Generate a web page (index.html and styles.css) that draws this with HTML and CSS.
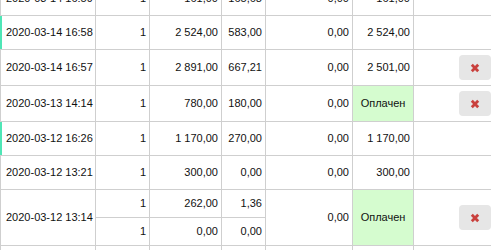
FILE: index.html
```html
<!DOCTYPE html>
<html>
<head>
<meta charset="utf-8">
<link rel="stylesheet" href="styles.css">
</head>
<body>
<div class="viewport">
<table class="orders">
  <colgroup>
    <col class="c-date"><col class="c-qty"><col class="c-sum"><col class="c-tax"><col class="c-disc"><col class="c-total"><col class="c-act">
  </colgroup>
  <tbody>
    <tr>
      <td class="date">2020-03-14 16:59</td>
      <td class="num">1</td>
      <td class="num">161,00</td>
      <td class="num">165,68</td>
      <td class="num">0,00</td>
      <td class="num">161,00</td>
      <td class="act"></td>
    </tr>
    <tr>
      <td class="date marked">2020-03-14 16:58</td>
      <td class="num">1</td>
      <td class="num">2 524,00</td>
      <td class="num">583,00</td>
      <td class="num">0,00</td>
      <td class="num">2 524,00</td>
      <td class="act"></td>
    </tr>
    <tr>
      <td class="date">2020-03-14 16:57</td>
      <td class="num">1</td>
      <td class="num">2 891,00</td>
      <td class="num">667,21</td>
      <td class="num">0,00</td>
      <td class="num">2 501,00</td>
      <td class="act"><button class="del" type="button"><svg viewBox="0 0 10 10" width="10" height="10"><path d="M1.8 1.8 L8.2 8.2 M8.2 1.8 L1.8 8.2"/></svg></button></td>
    </tr>
    <tr>
      <td class="date">2020-03-13 14:14</td>
      <td class="num">1</td>
      <td class="num">780,00</td>
      <td class="num">180,00</td>
      <td class="num">0,00</td>
      <td class="num paid">Оплачен</td>
      <td class="act"><button class="del" type="button"><svg viewBox="0 0 10 10" width="10" height="10"><path d="M1.8 1.8 L8.2 8.2 M8.2 1.8 L1.8 8.2"/></svg></button></td>
    </tr>
    <tr>
      <td class="date marked">2020-03-12 16:26</td>
      <td class="num">1</td>
      <td class="num">1 170,00</td>
      <td class="num">270,00</td>
      <td class="num">0,00</td>
      <td class="num">1 170,00</td>
      <td class="act"></td>
    </tr>
    <tr>
      <td class="date">2020-03-12 13:21</td>
      <td class="num">1</td>
      <td class="num">300,00</td>
      <td class="num">0,00</td>
      <td class="num">0,00</td>
      <td class="num">300,00</td>
      <td class="act"></td>
    </tr>
    <tr>
      <td class="date" rowspan="2">2020-03-12 13:14</td>
      <td class="num sub">1</td>
      <td class="num sub">262,00</td>
      <td class="num sub">1,36</td>
      <td class="num" rowspan="2">0,00</td>
      <td class="num paid" rowspan="2">Оплачен</td>
      <td class="act" rowspan="2"><button class="del" type="button"><svg viewBox="0 0 10 10" width="10" height="10"><path d="M1.8 1.8 L8.2 8.2 M8.2 1.8 L1.8 8.2"/></svg></button></td>
    </tr>
    <tr>
      <td class="num sub">1</td>
      <td class="num sub">0,00</td>
      <td class="num sub">0,00</td>
    </tr>
    <tr>
      <td class="date">2020-03-12 12:40</td>
      <td class="num">1</td>
      <td class="num">540,00</td>
      <td class="num">0,00</td>
      <td class="num">0,00</td>
      <td class="num">540,00</td>
      <td class="act"></td>
    </tr>
  </tbody>
</table>
</div>
</body>
</html>
```

FILE: styles.css
```css
html, body {
  margin: 0;
  padding: 0;
  background: #fff;
  overflow: hidden;
}
.viewport {
  width: 491px;
  height: 250px;
  overflow: hidden;
}
.orders {
  border-collapse: collapse;
  table-layout: fixed;
  width: 500px;
  margin-top: -19px;
  font-family: "Liberation Sans", Arial, sans-serif;
  font-size: 11px;
  line-height: 17px;
  color: #111;
}
.c-date { width: 95px; }
.c-qty { width: 54px; }
.c-sum { width: 72px; }
.c-tax { width: 44px; }
.c-disc { width: 87px; }
.c-total { width: 61px; }
.c-act { width: 87px; }
.orders td {
  border: 1px solid #cfcfcf;
  padding: 8px 3px 8px 5px;
  vertical-align: middle;
  white-space: nowrap;
}
.orders td.num { text-align: right; }
.orders td.sub { padding-top: 5px; padding-bottom: 5px; }
.orders td.paid {
  background: #d5fccf;
  text-align: center;
  padding-left: 3px;
}
.orders td.marked {
  border-left-color: #4fe6b6;
  box-shadow: inset 1px 0 0 #4fe6b6;
}
.orders td.act {
  padding: 5px 9px 5px 4px;
  text-align: right;
}
.del {
  display: inline-block;
  vertical-align: middle;
  width: 32px;
  height: 25px;
  padding: 0;
  margin: 0;
  border: none;
  border-radius: 4px;
  background: #e6e6e6;
}
.del svg {
  display: block;
  margin: 0 auto;
}
.del path {
  stroke: #c9403d;
  stroke-width: 2.8;
  stroke-linecap: butt;
  fill: none;
}
```
